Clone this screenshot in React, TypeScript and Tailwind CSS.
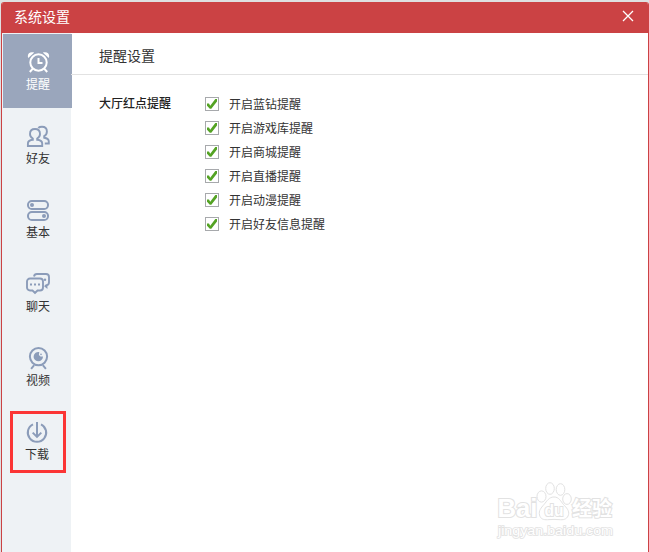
import type { ReactNode } from "react";

const AlarmIcon = () => (
  <svg width={24} height={24} viewBox="0 0 24 24" fill="none" stroke="currentColor" strokeWidth={2}>
    <circle cx="12.5" cy="12.5" r="8.2" />
    <path d="M12.5 8v5h4" />
    <path d="M6.6 18.800l-2.800 3.200M18.400 18.800l2.800 3.200" />
    <path d="M2.200 8C.8 4 3.600 1.200 8.200 2.600ZM22.800 8c1.400-4-1.400-6.800-6-5.400Z" fill="currentColor" stroke="none" />
  </svg>
);

const FriendsIcon = () => (
  <svg width={24} height={24} viewBox="0 0 24 24" fill="none" stroke="currentColor" strokeWidth={1.9}>
    <path d="M6.800 14.500C4.800 13.300 4 11.600 4 9.900c0-2.900 2-4.900 5-4.900s5 2 5 4.900c0 1.700-.8 3.400-2.800 4.600v1.300c3.100.4 5 1.300 5 3.600V22H1.900v-2.600c0-2.300 1.800-3.200 4.900-3.600z" />
    <path d="M12.300 4c.9-.9 2.200-1.200 3.700-1.200 3 0 4.900 1.900 4.900 4.700 0 2-.8 3.500-2.700 4.600v1.700c3 .5 4.600 1.400 4.600 3.600v2.100h-4" />
  </svg>
);

const BasicIcon = () => (
  <svg width={24} height={24} viewBox="0 0 24 24" fill="none" stroke="currentColor" strokeWidth={2}>
    <rect x="2" y="3" width="20" height="8" rx="3.8" />
    <rect x="2" y="14" width="20" height="8" rx="3.8" />
    <circle cx="6" cy="7" r="2" fill="currentColor" stroke="none" />
    <circle cx="18" cy="18" r="2" fill="currentColor" stroke="none" />
  </svg>
);

const ChatIcon = () => (
  <svg width={24} height={24} viewBox="0 0 24 24" fill="none" stroke="currentColor" strokeWidth={1.9}>
    <path d="M4 6.500h10a3 3 0 0 1 3 3v6a3 3 0 0 1-3 3h-2.500L9 21l-2.500-2.500H4a3 3 0 0 1-3-3v-6a3 3 0 0 1 3-3z" />
    <path d="M8 4.500c.3-1.600 1.200-2.500 2.800-2.500H20c2 0 3 1.100 3 3v5.300c0 1.700-.9 2.800-2.500 3v1.700l-1.800-1.400" />
    <g fill="currentColor" stroke="none">
      <rect x="4" y="11.500" width="2" height="2" />
      <rect x="8" y="11.500" width="2" height="2" />
      <rect x="12" y="11.500" width="2" height="2" />
      <circle cx="19" cy="7.800" r="1.200" />
    </g>
  </svg>
);

const VideoIcon = () => (
  <svg width={24} height={24} viewBox="0 0 24 24" fill="none" stroke="currentColor" strokeWidth={2}>
    <circle cx="12.5" cy="10.600" r="8.600" />
    <path d="M8.200 19.200l-3.100 3.600M16.800 19.200l3.100 3.600" />
    <path d="M13.300 6a4.700 4.700 0 1 0 3.700 4.600h-2.500l-1.600-1.600Z" fill="currentColor" stroke="none" />
    <circle cx="15" cy="8.400" r=".8" fill="currentColor" stroke="none" />
  </svg>
);

const DownloadIcon = () => (
  <svg width={24} height={24} viewBox="0 0 24 24" fill="none" stroke="currentColor" strokeWidth={2}>
    <path d="M8 4.300a9.200 9.200 0 1 0 8 0" />
    <path d="M12 2v14.600M7.700 12.600l4.300 4.300 4.300-4.300" />
  </svg>
);

const CheckIcon = () => (
  <svg width={12} height={12} viewBox="0 0 12 12" fill="#54a324">
    <path d="M1 5.500h2l1.200 2.200L9.300 1H11v2.500L5.300 10.800H3.800L1 7.800z" />
  </svg>
);

const Watermark = () => (
  <svg
    width={132}
    height={64}
    viewBox="0 0 132 64"
    fill="#fff"
    stroke="#e2e2e2"
    strokeWidth={1}
    className="absolute left-[490px] top-[478px] font-['Liberation_Sans','Noto_Sans_CJK_SC',sans-serif]"
  >
    <ellipse cx="51.5" cy="18.500" rx="4.500" ry="5.600" />
    <ellipse cx="60" cy="10.500" rx="4.300" ry="5.800" />
    <ellipse cx="70.500" cy="11.500" rx="4.300" ry="5.800" />
    <ellipse cx="77" cy="21" rx="4.300" ry="5.400" />
    <path d="M64 19c-5 0-7 4-10 7.500-3 3.500-5.500 6-4.500 10.500 1 4 4 5 8 4.700 4-.4 9-.4 13 0 4 .3 7-1.200 8-5 1-4-2-7-5-10.200-3-3.500-4.500-7.500-9.500-7.500z" />
    <g strokeWidth={2} paintOrder="stroke" fontWeight="bold">
      <text x="7.500" y="39" fontSize="25" textLength="40" lengthAdjust="spacingAndGlyphs">Bai</text>
      <text x="54.500" y="38" fontSize="17" textLength="19" lengthAdjust="spacingAndGlyphs">du</text>
      <text x="82" y="38" fontSize="20">经验</text>
    </g>
    <text x="8" y="57" fontSize="13" strokeWidth={1.6} paintOrder="stroke" textLength="115" lengthAdjust="spacingAndGlyphs">
      jingyan.baidu.com
    </text>
  </svg>
);

interface NavItem {
  label: string;
  icon: ReactNode;
}

const navItems: NavItem[] = [
  { label: "提醒", icon: <AlarmIcon /> },
  { label: "好友", icon: <FriendsIcon /> },
  { label: "基本", icon: <BasicIcon /> },
  { label: "聊天", icon: <ChatIcon /> },
  { label: "视频", icon: <VideoIcon /> },
  { label: "下载", icon: <DownloadIcon /> },
];

const navClass = (label: string) => {
  if (label === "提醒") {
    return "ml-px flex h-[74px] w-[69px] flex-col items-center bg-[#9aa6bc] pl-px pt-4 text-white";
  }
  if (label === "下载") {
    return "flex h-[74px] flex-col items-center pl-px pt-4 text-[#8b9cb9]";
  }
  return "flex h-[74px] flex-col items-center pl-[3px] pt-4 text-[#8b9cb9]";
};

const options = [
  "开启蓝钻提醒",
  "开启游戏库提醒",
  "开启商城提醒",
  "开启直播提醒",
  "开启动漫提醒",
  "开启好友信息提醒",
];

export default function App() {
  return (
    <div className="relative h-[552px] w-[649px] overflow-hidden bg-[#dfe0e1] pl-px pt-[2px] font-['Noto_Sans_CJK_SC',sans-serif] text-[#333]">
      <div className="flex h-[550px] flex-col overflow-hidden rounded-t-[3px] border-x border-[#cb4244] bg-white">
        <header className="flex h-[31px] shrink-0 items-center justify-between bg-[#cb4244] pl-3 pr-[14px] text-sm leading-none text-white">
          <span className="pb-[3px]">系统设置</span>
          <svg width={12} height={12} viewBox="0 0 12 12" stroke="currentColor" strokeWidth={1.3} className="mb-1">
            <path d="M1 1l10 10M11 1L1 11" />
          </svg>
        </header>

        <div className="flex flex-1">
          <nav className="w-[69px] shrink-0 bg-[#eef2f5] pt-px">
            {navItems.map((item, i) => (
              <div key={item.label} className={navClass(item.label)}>
                {item.icon}
                <span className={i === 0 ? "mt-1 text-xs leading-3" : "mt-1 text-xs leading-3 text-[#333]"}>
                  {item.label}
                </span>
              </div>
            ))}
          </nav>

          <main className="flex-1">
            <h1 className="flex h-[42px] items-center border-b border-[#e2e2e2] pl-7 pt-0.5 text-sm leading-none">
              提醒设置
            </h1>
            <section className="flex pl-7 pt-[17px] text-xs">
              <h2 className="w-[106px] font-medium leading-[22px] text-[#222]">大厅红点提醒</h2>
              <ul>
                {options.map((option) => (
                  <li key={option} className="flex h-6 items-center">
                    <span className="mr-2.5 flex size-[14px] items-center justify-center border border-[#a7a9ac] bg-white">
                      <CheckIcon />
                    </span>
                    {option}
                  </li>
                ))}
              </ul>
            </section>
          </main>
        </div>
      </div>

      {/* highlight around the download entry */}
      <div className="absolute left-[10px] top-[411px] h-[62px] w-[56px] border-3 border-[#fb3535]" />
      <Watermark />
    </div>
  );
}
